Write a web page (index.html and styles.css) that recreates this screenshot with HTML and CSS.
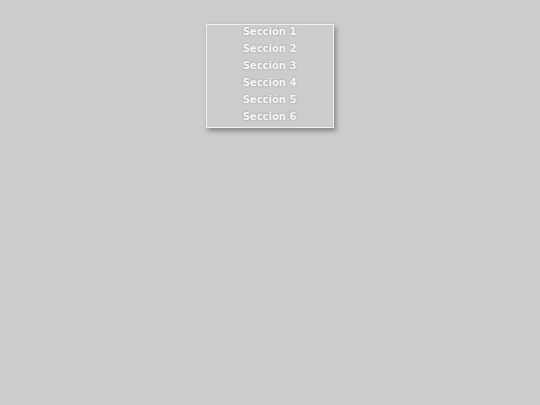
FILE: index.html
```html
<!DOCTYPE html>
<html>
<head>
<meta charset="utf-8">
<link rel="stylesheet" href="styles.css">
</head>
<body>
<ul class="menu">
<li>Sección 1</li>
<li>Sección 2</li>
<li>Sección 3</li>
<li>Sección 4</li>
<li>Sección 5</li>
<li>Sección 6</li>
</ul>
</body>
</html>
```
FILE: styles.css
```css
html, body { margin: 0; padding: 0; background: #cccccc; height: 100%; }
body { display: flex; justify-content: center; }
.menu {
  list-style: none;
  margin: 24px 0 0 -1px;
  padding: 0 0 1px 0;
  width: 126px;
  height: 101px;
  border: 1px solid #eeeeee;
  box-shadow: 2px 3px 5px rgba(0,0,0,0.35);
  font-family: "DejaVu Sans", Verdana, sans-serif;
  font-weight: bold;
  font-size: 10px;
  color: #f8f8f8;
  text-align: center;
}
.menu li {
  height: 17px;
  line-height: 14px;
  text-shadow: 0 0 2px rgba(0,0,0,0.3);
}
```
